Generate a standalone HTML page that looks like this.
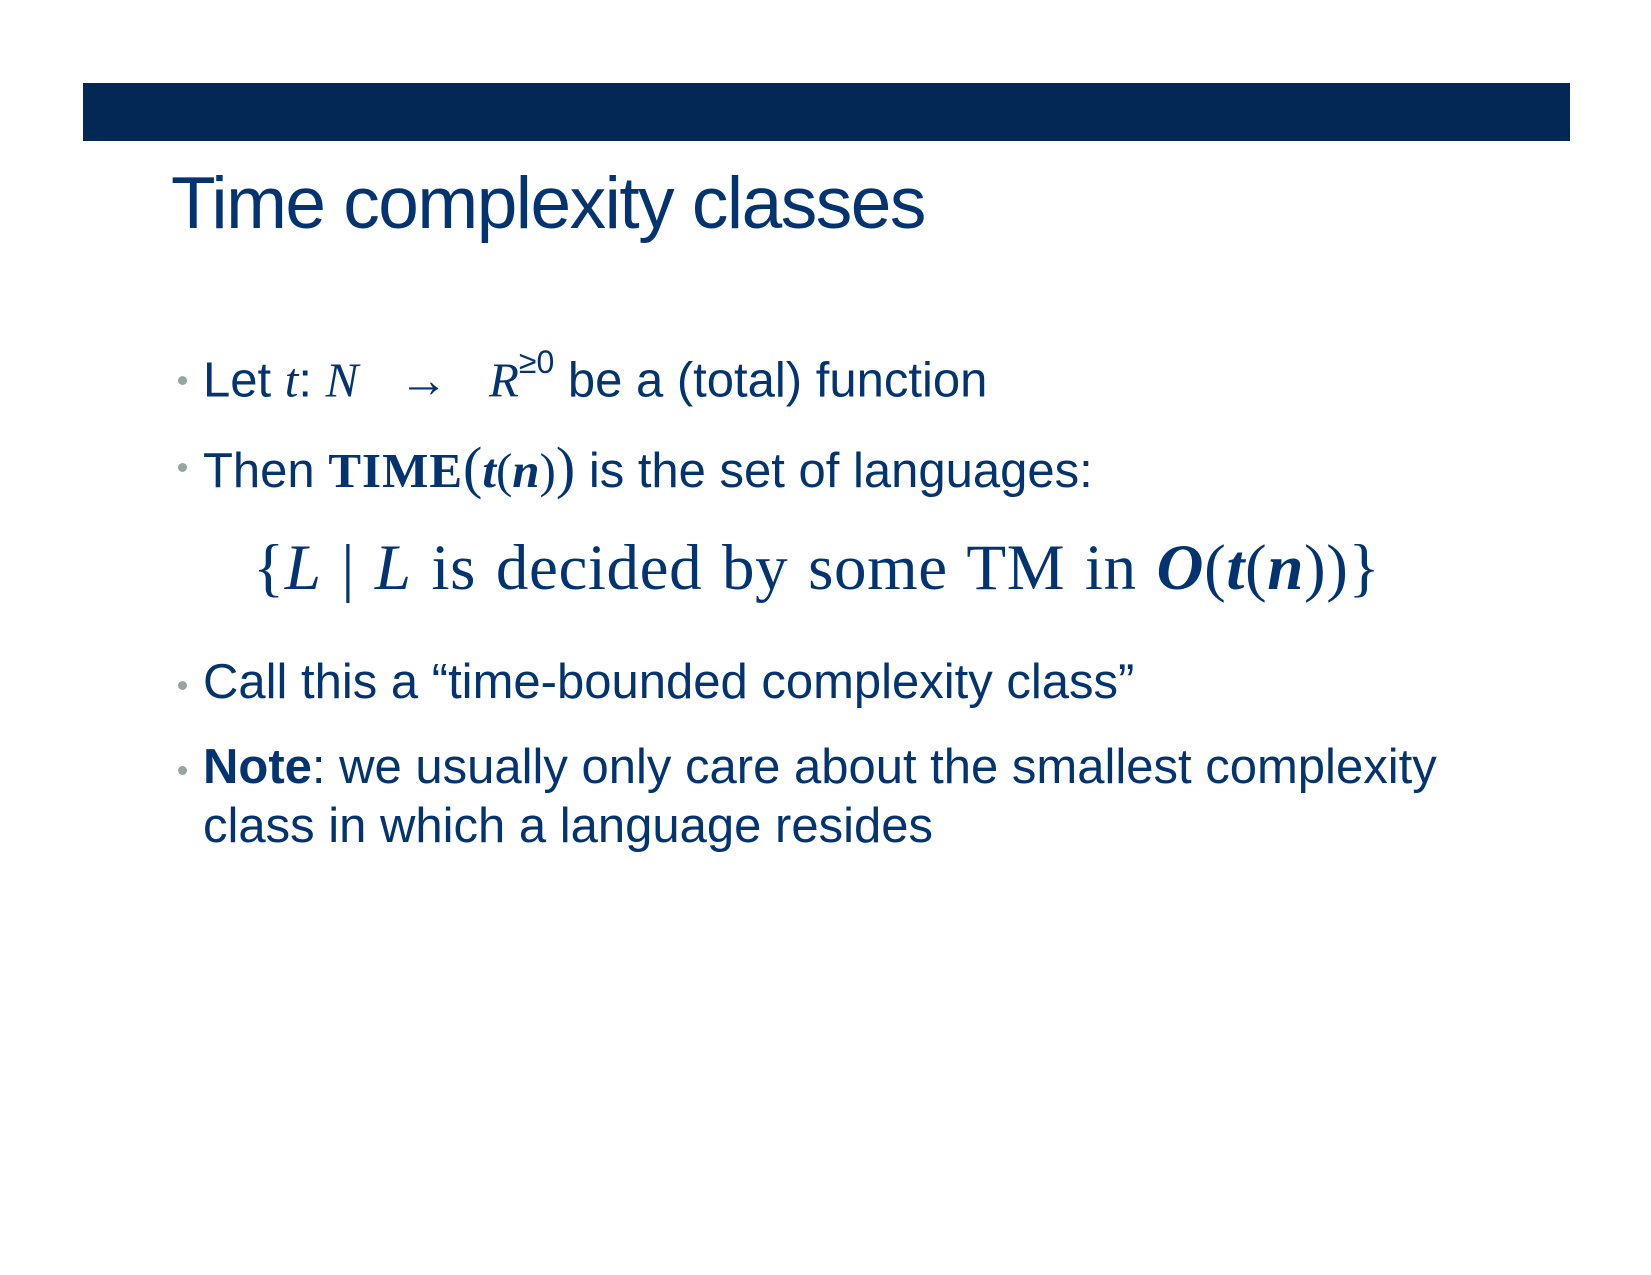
<!DOCTYPE html>
<html><head><meta charset="utf-8"><style>
html,body{margin:0;padding:0;width:1651px;height:1275px;background:#fff;overflow:hidden;position:relative}
.bar{position:absolute;left:83px;top:83px;width:1487px;height:58px;background:#022855}
.t{position:absolute;white-space:nowrap;color:#04346f;font-family:"Liberation Sans",sans-serif;line-height:1}
.title{left:171px;top:167px;font-size:73px;letter-spacing:-1.5px}
.b{font-size:49px;left:203px}
.dot{position:absolute;width:9px;height:9px;border-radius:50%;background:#97a69c}
.m{font-family:"Liberation Serif",serif}
i.m{font-style:italic}
.math{left:253px;font-family:"Liberation Serif",serif;font-size:65px;letter-spacing:0.6px;word-spacing:3px}
</style></head><body>
<div class="bar"></div>
<div class="t title">Time complexity classes</div>

<div class="dot" style="left:178px;top:376px"></div>
<div class="t b" style="top:352px">Let <i class="m">t</i>: <i class="m">N</i> &nbsp;&nbsp;<span class="m">→</span>&nbsp;&nbsp; <i class="m">R</i><sup style="font-size:32px;position:relative;top:-6px">≥0</sup> be a (total) function</div>

<div class="dot" style="left:178px;top:463px"></div>
<div class="t b" style="top:439px">Then <b class="m" style="letter-spacing:1px">TIME</b><span class="m" style="font-size:58px">(</span><b class="m"><i>t</i></b><span class="m">(</span><b class="m"><i>n</i></b><span class="m">)</span><span class="m" style="font-size:58px">)</span> is the set of languages:</div>

<div class="t math" style="top:536px">{<i>L</i> | <i>L</i> is decided by some TM in <b><i>O</i></b>(<b><i>t</i></b>(<b><i>n</i></b>))}</div>

<div class="dot" style="left:178px;top:681px"></div>
<div class="t b" style="top:658px">Call this a “time-bounded complexity class”</div>

<div class="dot" style="left:178px;top:766px"></div>
<div class="t b" style="top:743px"><b>Note</b>: we usually only care about the smallest complexity</div>
<div class="t b" style="top:802px">class in which a language resides</div>
</body></html>
